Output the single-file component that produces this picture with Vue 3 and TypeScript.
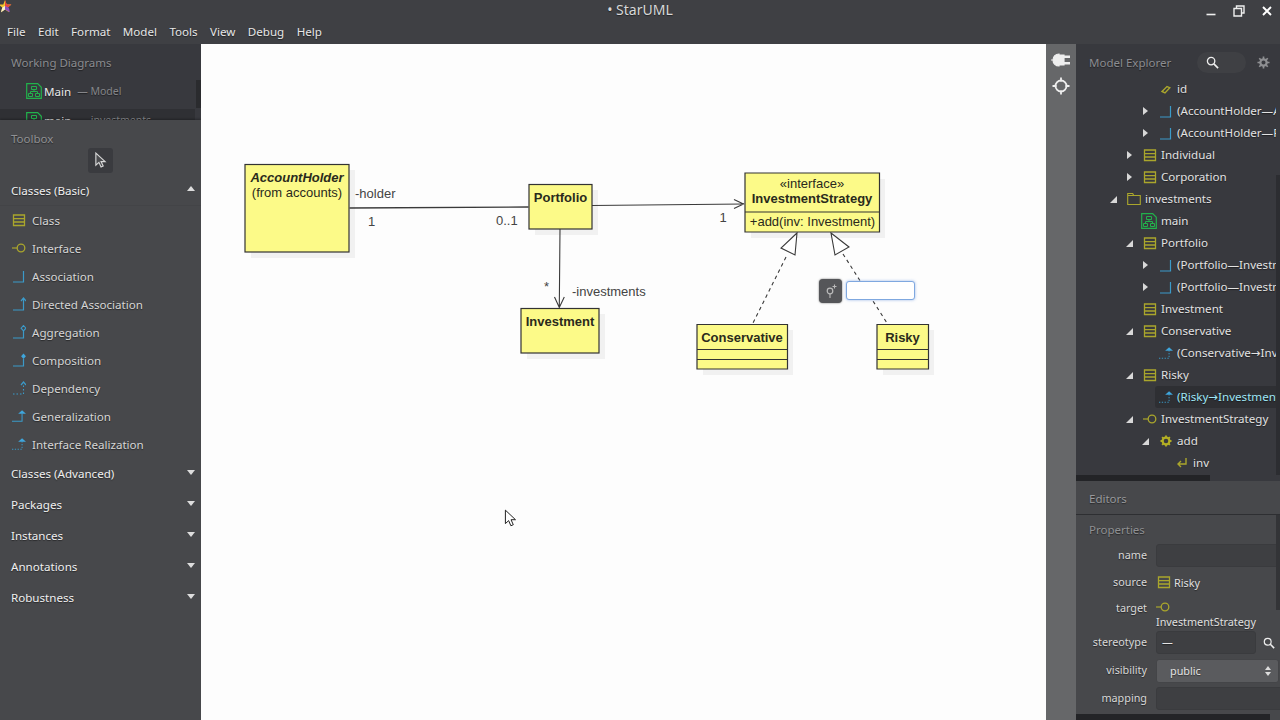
<template>
  <div class="app">
    <svg class="defs" width="0" height="0">
      <defs>
        <symbol id="i-class" viewBox="0 0 14 14">
          <path d="M1.5 2h11v10.5h-11zM1.5 5.6h11M1.5 9h11" fill="none" stroke="#aaa62c" stroke-width="1.3" />
        </symbol>
        <symbol id="i-interface" viewBox="0 0 14 14">
          <path d="M0 7h5" stroke="#aaa62c" stroke-width="1.2" />
          <circle cx="9" cy="7" r="3.8" fill="none" stroke="#aaa62c" stroke-width="1.3" />
        </symbol>
        <symbol id="i-assoc" viewBox="0 0 14 14">
          <path d="M1 13h10.5V2" fill="none" stroke="#3b9ac9" stroke-width="1.2" />
        </symbol>
        <symbol id="i-directed" viewBox="0 0 14 14">
          <path d="M1 13h10.5V2M9 4l2.5-3L14 4" fill="none" stroke="#3b9ac9" stroke-width="1.2" />
        </symbol>
        <symbol id="i-aggregation" viewBox="0 0 14 14">
          <path d="M1 13h10.5V6" fill="none" stroke="#3b9ac9" stroke-width="1.2" />
          <path d="M11.5 0.5l2.4 2.7-2.4 2.7-2.4-2.7z" fill="none" stroke="#3b9ac9" stroke-width="1.1" />
        </symbol>
        <symbol id="i-composition" viewBox="0 0 14 14">
          <path d="M1 13h10.5V6" fill="none" stroke="#3b9ac9" stroke-width="1.2" />
          <path d="M11.5 0.5l2.4 2.7-2.4 2.7-2.4-2.7z" fill="#3fa6dc" />
        </symbol>
        <symbol id="i-dependency" viewBox="0 0 14 14">
          <path d="M1 13h10.5V4" fill="none" stroke="#3b9ac9" stroke-width="1.1" stroke-dasharray="1.5 2" />
          <path d="M9 4l2.5-3L14 4" fill="none" stroke="#3b9ac9" stroke-width="1.2" />
        </symbol>
        <symbol id="i-generalization" viewBox="0 0 16 14">
          <path d="M0 13h11.5V4" fill="none" stroke="#3b9ac9" stroke-width="1.2" />
          <path d="M7 4.5h9L11.5 0.5z" fill="#3fa6dc" />
        </symbol>
        <symbol id="i-realization" viewBox="0 0 16 14">
          <path d="M0 13h11.5V4" fill="none" stroke="#3b9ac9" stroke-width="1.1" stroke-dasharray="1.5 1.7" />
          <path d="M7 4.5h9L11.5 0.5z" fill="#3fa6dc" />
        </symbol>
        <symbol id="i-diagram" viewBox="0 0 16 16">
          <path d="M0.7 0.7h11l3.6 3.6v11h-14.6z" fill="none" stroke="#22b14c" stroke-width="1.2" />
          <path d="M5.5 3.5h5v3h-5zM2.5 10.5h4v3h-4zM9.5 10.5h4v3h-4zM8 6.5v2M4.5 10.5v-2h7v2" fill="none" stroke="#22b14c" stroke-width="1" />
        </symbol>
        <symbol id="i-folder" viewBox="0 0 14 14">
          <path d="M0.7 1.5h5l1 2h6.6v9h-12.6zM0.7 3.5h6" fill="none" stroke="#aaa62c" stroke-width="1.1" />
        </symbol>
        <symbol id="i-attr" viewBox="0 0 14 14">
          <path d="M3 9.5l5-5 2.8 1.2L6 11z" fill="none" stroke="#aaa62c" stroke-width="1.4" />
        </symbol>
        <symbol id="i-op" viewBox="0 0 14 14">
          <circle cx="7" cy="7" r="3.4" fill="none" stroke="#b3af24" stroke-width="2.2" />
          <path d="M7 1.5v2M7 10.5v2M1.5 7h2M10.5 7h2M3.1 3.1l1.4 1.4M9.5 9.5l1.4 1.4M3.1 10.9l1.4-1.4M9.5 4.5l1.4-1.4" stroke="#b3af24" stroke-width="1.8" />
        </symbol>
        <symbol id="i-param" viewBox="0 0 14 14">
          <path d="M11 2v6H3M6 5L3 8l3 3" fill="none" stroke="#aaa62c" stroke-width="1.4" />
        </symbol>
      </defs>
    </svg>

    <header class="titlebar">
      <svg class="logo" viewBox="0 0 16 16" width="16" height="16">
        <path d="M5 0l1.700 4.400 4.700.2-3.700 3 1.300 4.600L5 9.600 1 12.200l1.300-4.600-3.700-3 4.700-.2z" fill="#f4c430" />
        <path d="M5 0l1.700 4.400 4.700.2-3.700 3L5 6z" fill="#e8433f" />
        <path d="M8.700 7.600l1.300 4.600L5 9.600V6z" fill="#8a4fc0" />
        <path d="M5 6v3.600l-4 2.600 1.300-4.600z" fill="#f8efd0" />
      </svg>
      <span class="title">• StarUML</span>
      <div class="winctl">
        <svg viewBox="0 0 12 12" width="12" height="12"><path d="M1.500 9.500h9" stroke="#eee" stroke-width="1.600" /></svg>
        <svg viewBox="0 0 12 12" width="12" height="12"><path d="M1 3.500h7.500V11H1zM3.500 3.500V1H11v7H8.500" fill="none" stroke="#eee" stroke-width="1.400" /></svg>
        <svg viewBox="0 0 12 12" width="12" height="12"><path d="M2 2l8 8M10 2l-8 8" stroke="#fff" stroke-width="1.900" /></svg>
      </div>
    </header>

    <nav class="menubar">
      <span v-for="m in menus" :key="m">{{ m }}</span>
    </nav>

    <div class="body">
      <aside class="left">
        <section class="working">
          <div class="panel-title">Working Diagrams</div>
          <div class="wd-row">
            <svg class="ic16"><use href="#i-diagram" /></svg>
            <span class="wd-name">Main</span><span class="wd-sub">— Model</span>
          </div>
          <div class="wd-row selected">
            <svg class="ic16"><use href="#i-diagram" /></svg>
            <span class="wd-name">main</span><span class="wd-sub">— investments</span>
          </div>
          <div class="wd-scroll"></div>
        </section>

        <section class="toolbox">
          <div class="panel-title tb-title">Toolbox</div>
          <div class="cursor-btn">
            <svg viewBox="0 0 14 18" width="13" height="17">
              <path d="M2 1v13l3.300-3 2.300 5 2.300-1-2.300-4.800H12z" fill="#4a4b4e" stroke="#d8d8d8" stroke-width="1.200" />
            </svg>
          </div>
          <div class="group open">
            <span>Classes (Basic)</span><i class="tri up"></i>
          </div>
          <div v-for="t in tools" :key="t.label" class="tool">
            <svg class="ic14"><use :href="'#i-' + t.icon" /></svg>
            <span>{{ t.label }}</span>
          </div>
          <div v-for="g in groups" :key="g" class="group">
            <span>{{ g }}</span><i class="tri"></i>
          </div>
        </section>
      </aside>

      <main class="canvas">
        <svg class="diagram" viewBox="201 44 845 676" width="845" height="676">
          <g class="shadows" fill="#f1f1f1">
            <rect x="251" y="170" width="104" height="88" />
            <rect x="535" y="190" width="63" height="45" />
            <rect x="527" y="314" width="78" height="45" />
            <rect x="751" y="179" width="134" height="59" />
            <rect x="703" y="330" width="90" height="45" />
            <rect x="883" y="330" width="51" height="45" />
          </g>

          <g class="lines" fill="none" stroke="#3a3a3a" stroke-width="1.100">
            <path d="M349.500 208L528.500 207" stroke-width="1.300" />
            <path d="M592 205.500L744 204M734 199.500l9.500 4.500-9.500 4.500" />
            <path d="M560 229L559.300 307.500M554.500 297l4.800 10.500 5-10.500" />
            <path d="M786 257L753 323M843 254L887 323" stroke-dasharray="3.500 3.500" />
            <path d="M797 233L781 248L795 255Z M831 233L849 247L835 255Z" fill="#fff" />
          </g>

          <g class="boxes" fill="#fcfa88" stroke="#333" stroke-width="1.200">
            <rect x="245" y="164.500" width="104" height="87.500" />
            <rect x="529" y="184.500" width="63" height="44.500" />
            <rect x="521" y="308.500" width="78" height="44.500" />
            <path d="M745 173h134.500v59H745zM745 212h134.500" />
            <path d="M697 324.500h90.500v44.500H697zM697 349.500h90.500M697 359.500h90.500" />
            <path d="M877 324.500h51.500v44.500H877zM877 349.500h51.500M877 359.500h51.500" />
          </g>

          <g class="labels">
            <text x="297" y="181.500" class="c bi">AccountHolder</text>
            <text x="297" y="196.500" class="c">(from accounts)</text>
            <text x="560.500" y="201.500" class="c b">Portfolio</text>
            <text x="560" y="325.500" class="c b">Investment</text>
            <text x="812" y="187.500" class="c">«interface»</text>
            <text x="812" y="202.500" class="c b">InvestmentStrategy</text>
            <text x="812.500" y="225.500" class="c">+add(inv: Investment)</text>
            <text x="742" y="341.500" class="c b">Conservative</text>
            <text x="902.500" y="341.500" class="c b">Risky</text>
            <text x="355" y="197.500" class="note">-holder</text>
            <text x="371.500" y="225.500" class="note c">1</text>
            <text x="496" y="225" class="note">0..1</text>
            <text x="723" y="221.500" class="note c">1</text>
            <text x="546.500" y="291" class="note c">*</text>
            <text x="572" y="295.500" class="note">-investments</text>
          </g>
        </svg>

        <div class="inline-edit">
          <div class="edit-btn">
            <svg viewBox="0 0 16 16" width="16" height="16">
              <circle cx="7" cy="8" r="2.800" fill="none" stroke="#bbb" stroke-width="1.200" />
              <path d="M7 11v4M11.500 1.500v4M9.500 3.500h4" stroke="#bbb" stroke-width="1.100" />
            </svg>
          </div>
          <input class="edit-input" type="text" />
        </div>

        <svg class="pointer" viewBox="0 0 14 20" width="13" height="19">
          <path d="M1.500 1v14.500l3.500-3.200 2.400 5.500 2.600-1.100-2.400-5.400h4.800z" fill="#fff" stroke="#111" stroke-width="1" />
        </svg>
      </main>

      <div class="strip">
        <svg viewBox="0 0 20 16" width="20" height="16">
          <path d="M0 8h6M8 2v12a6 6 0 0 1 0-12zM8 3h5v10H8z" fill="#eee" stroke="#eee" stroke-width="1.200" />
          <path d="M13 4.800h6M13 11.200h6" stroke="#eee" stroke-width="2.400" />
        </svg>
        <svg viewBox="0 0 18 18" width="18" height="18">
          <circle cx="9" cy="9" r="5.500" fill="none" stroke="#eee" stroke-width="1.800" />
          <path d="M9 0.500v4M9 13.500v4M0.500 9h4M13.500 9h4" stroke="#eee" stroke-width="1.800" />
        </svg>
      </div>

      <aside class="right">
        <section class="explorer">
          <div class="exp-head">
            <span class="panel-title-inline">Model Explorer</span>
            <div class="search">
              <svg viewBox="0 0 14 14" width="13" height="13">
                <circle cx="5.500" cy="5.500" r="4" fill="none" stroke="#eee" stroke-width="1.400" />
                <path d="M8.500 8.500l4.500 4.500" stroke="#eee" stroke-width="1.800" />
              </svg>
            </div>
            <svg class="gear" viewBox="0 0 14 14" width="13" height="13">
              <circle cx="7" cy="7" r="3.400" fill="none" stroke="#8e8f92" stroke-width="2.400" />
              <path d="M7 0.500v3M7 10.500v3M0.500 7h3M10.500 7h3M2.400 2.400l2.100 2.100M9.500 9.500l2.100 2.100M2.400 11.600l2.100-2.100M9.500 4.500l2.100-2.100" stroke="#8e8f92" stroke-width="1.800" />
            </svg>
          </div>
          <div class="tree">
            <div
              v-for="(n, i) in nodes"
              :key="i"
              class="node"
              :class="{ sel: n.sel }"
              :style="{ paddingLeft: n.level * 16 + 'px' }"
            >
              <span class="twisty">
                <i v-if="n.tw === 'r'" class="tw-right"></i>
                <i v-if="n.tw === 'd'" class="tw-down"></i>
              </span>
              <span class="node-icon"><svg :class="n.icon === 'diagram' ? 'ic16' : 'ic13'"><use :href="'#i-' + n.icon" /></svg></span>
              <span class="node-label">{{ n.label }}</span>
            </div>
          </div>
          <div class="tree-vscroll"></div>
          <div class="tree-hscroll"></div>
        </section>

        <section class="editors">
          <div class="editors-title">Editors</div>
          <div class="props">
            <div class="props-title">Properties</div>
            <div class="prop-grid">
              <label>name</label>
              <div class="field"></div>
              <label>source</label>
              <div class="ref"><svg class="ic14"><use href="#i-class" /></svg>Risky</div>
              <label class="target-label">target</label>
              <div class="ref stacked">
                <svg class="ic14"><use href="#i-interface" /></svg>
                <span>InvestmentStrategy</span>
              </div>
              <label>stereotype</label>
              <div class="with-search">
                <div class="field short">—</div>
                <svg viewBox="0 0 14 14" width="12" height="12">
                  <circle cx="5.500" cy="5.500" r="4" fill="none" stroke="#eee" stroke-width="1.400" />
                  <path d="M8.500 8.500l4.500 4.500" stroke="#eee" stroke-width="1.800" />
                </svg>
              </div>
              <label>visibility</label>
              <div class="select">public<span class="updown"></span></div>
              <label>mapping</label>
              <div class="field"></div>
            </div>
            <div class="props-vscroll"></div>
            <div class="props-hscroll"></div>
          </div>
        </section>
      </aside>
    </div>
  </div>
</template>

<script setup lang="ts">
interface TreeNode {
  level: number
  tw?: 'r' | 'd'
  icon: string
  label: string
  sel?: boolean
}

const menus = ['File', 'Edit', 'Format', 'Model', 'Tools', 'View', 'Debug', 'Help']

const tools = [
  { icon: 'class', label: 'Class' },
  { icon: 'interface', label: 'Interface' },
  { icon: 'assoc', label: 'Association' },
  { icon: 'directed', label: 'Directed Association' },
  { icon: 'aggregation', label: 'Aggregation' },
  { icon: 'composition', label: 'Composition' },
  { icon: 'dependency', label: 'Dependency' },
  { icon: 'generalization', label: 'Generalization' },
  { icon: 'realization', label: 'Interface Realization' },
]

const groups = ['Classes (Advanced)', 'Packages', 'Instances', 'Annotations', 'Robustness']

const nodes: TreeNode[] = [
  { level: 2, icon: 'attr', label: 'id' },
  { level: 2, tw: 'r', icon: 'assoc', label: '(AccountHolder—Account)' },
  { level: 2, tw: 'r', icon: 'assoc', label: '(AccountHolder—Portfolio)' },
  { level: 1, tw: 'r', icon: 'class', label: 'Individual' },
  { level: 1, tw: 'r', icon: 'class', label: 'Corporation' },
  { level: 0, tw: 'd', icon: 'folder', label: 'investments' },
  { level: 1, icon: 'diagram', label: 'main' },
  { level: 1, tw: 'd', icon: 'class', label: 'Portfolio' },
  { level: 2, tw: 'r', icon: 'assoc', label: '(Portfolio—Investment)' },
  { level: 2, tw: 'r', icon: 'assoc', label: '(Portfolio—InvestmentStrategy)' },
  { level: 1, icon: 'class', label: 'Investment' },
  { level: 1, tw: 'd', icon: 'class', label: 'Conservative' },
  { level: 2, icon: 'realization', label: '(Conservative→InvestmentStrategy)' },
  { level: 1, tw: 'd', icon: 'class', label: 'Risky' },
  { level: 2, icon: 'realization', label: '(Risky→InvestmentStrategy)', sel: true },
  { level: 1, tw: 'd', icon: 'interface', label: 'InvestmentStrategy' },
  { level: 2, tw: 'd', icon: 'op', label: 'add' },
  { level: 3, icon: 'param', label: 'inv' },
]
</script>

<style scoped>
.app {
  width: 1280px;
  height: 720px;
  display: flex;
  flex-direction: column;
  overflow: hidden;
  background: #3f4044;
  color: #e4e4e4;
  font-family: "Noto Sans", "DejaVu Sans", sans-serif;
  font-size: 11.6px;
  text-shadow: 0 1px 1px rgba(0, 0, 0, 0.45);
}

.defs {
  position: absolute;
}

.titlebar {
  height: 20px;
  position: relative;
  flex: none;
}

.logo {
  position: absolute;
  left: 0;
  top: 0;
}

.title {
  display: block;
  text-align: center;
  font-size: 14px;
  line-height: 20px;
  color: #d8d8d8;
}

.winctl {
  position: absolute;
  right: 7px;
  top: 5px;
  display: flex;
  gap: 16px;
}

.menubar {
  height: 24px;
  flex: none;
  display: flex;
  align-items: center;
  gap: 12.4px;
  padding: 0 0 2px 7px;
  box-sizing: border-box;
  color: #e6e6e6;
}

.body {
  flex: 1;
  display: flex;
  min-height: 0;
}

.left {
  width: 201px;
  flex: none;
  display: flex;
  flex-direction: column;
}

.working {
  height: 76px;
  flex: none;
  background: #38393e;
  position: relative;
  overflow: hidden;
  padding-top: 9px;
  box-sizing: border-box;
}

.panel-title {
  padding-left: 11px;
  color: #8b8c90;
  font-size: 11.5px;
  line-height: 20px;
}

.wd-row {
  height: 22px;
  margin-top: 7px;
  padding-left: 26px;
  display: flex;
  align-items: center;
  gap: 2px;
}

.wd-row + .wd-row {
  margin-top: 7px;
}

.wd-name {
  color: #e8e8e8;
  margin-right: 4px;
}

.wd-sub {
  color: #85868a;
  font-size: 10.5px;
}

.wd-row.selected {
  background: #2f3034;
  margin-right: 6px;
}

.wd-scroll {
  position: absolute;
  right: 0;
  top: 36px;
  width: 5px;
  height: 28px;
  background: #2a2b2e;
}

.toolbox {
  flex: 1;
  background: #47484b;
  padding-top: 9px;
  box-shadow: 0 -1px 2px rgba(0, 0, 0, 0.3);
  position: relative;
}

.tb-title {
  color: #909194;
}

.cursor-btn {
  width: 25px;
  height: 25px;
  margin: -1px 0 0 88px;
  background: #3a3b3f;
  border-radius: 3px;
  display: flex;
  align-items: center;
  justify-content: center;
}

.group {
  height: 31px;
  padding: 0 6px 0 11px;
  display: flex;
  align-items: center;
  justify-content: space-between;
  color: #f0f0f0;
}

.group.open {
  margin-top: 2px;
  border-bottom: 1px solid #434447;
  box-sizing: border-box;
}

.tri {
  width: 0;
  height: 0;
  border-left: 4px solid transparent;
  border-right: 4px solid transparent;
  border-top: 5px solid #ddd;
  margin-bottom: 3px;
}

.tri.up {
  border-top: 0;
  border-bottom: 5px solid #ddd;
}

.tool {
  height: 28px;
  padding-left: 12px;
  display: flex;
  align-items: center;
  gap: 6px;
  color: #d6d6d6;
}

.ic14 {
  width: 14px;
  height: 14px;
  flex: none;
}

.ic13 {
  width: 14px;
  height: 14px;
}

.ic16 {
  width: 16px;
  height: 16px;
  flex: none;
}

.canvas {
  width: 845px;
  flex: none;
  background: #fdfdfd;
  position: relative;
  overflow: hidden;
}

.diagram {
  display: block;
  font-family: "Liberation Sans", Arial, sans-serif;
  font-size: 13px;
  text-shadow: none;
}

.diagram text {
  fill: #2a2a1c;
}

.diagram .c {
  text-anchor: middle;
}

.diagram .b {
  font-weight: 700;
}

.diagram .bi {
  font-weight: 700;
  font-style: italic;
}

.diagram .note {
  fill: #444;
}

.inline-edit {
  position: absolute;
  left: 618px;
  top: 235px;
  display: flex;
  align-items: center;
  gap: 4px;
}

.edit-btn {
  width: 23px;
  height: 24px;
  background: #555659;
  border-radius: 4px;
  box-shadow: 0 0 2px rgba(0, 0, 0, 0.6);
  display: flex;
  align-items: center;
  justify-content: center;
}

.edit-input {
  width: 69px;
  height: 19px;
  box-sizing: border-box;
  border: 1px solid #7fa8e0;
  border-radius: 3px;
  background: #fff;
  outline: 0;
  padding: 0;
  margin-top: -2px;
  box-shadow: 0 0 3px rgba(90, 140, 220, 0.6);
}

.pointer {
  position: absolute;
  left: 303px;
  top: 465px;
}

.strip {
  width: 30px;
  flex: none;
  background: #666769;
  display: flex;
  flex-direction: column;
  align-items: center;
  gap: 9px;
  padding-top: 8px;
  box-sizing: border-box;
}

.right {
  flex: 1;
  min-width: 0;
  display: flex;
  flex-direction: column;
}

.explorer {
  height: 437px;
  flex: none;
  background: #38393e;
  position: relative;
  overflow: hidden;
}

.exp-head {
  height: 34px;
  display: flex;
  align-items: center;
  padding: 2px 0 0 13px;
  box-sizing: border-box;
}

.panel-title-inline {
  color: #8b8c90;
  font-size: 11.5px;
  width: 108px;
  flex: none;
}

.search {
  width: 49px;
  height: 21px;
  border-radius: 11px;
  background: #3f4044;
  display: flex;
  align-items: center;
  padding-left: 9px;
  box-sizing: border-box;
  flex: none;
}

.gear {
  margin-left: 11px;
}

.tree {
  width: 200px;
  overflow: hidden;
}

.node {
  height: 22px;
  display: flex;
  align-items: center;
  white-space: nowrap;
  margin-left: 30px;
}

.twisty {
  width: 14px;
  flex: none;
  display: flex;
  justify-content: center;
}

.tw-right {
  width: 0;
  height: 0;
  border-top: 4px solid transparent;
  border-bottom: 4px solid transparent;
  border-left: 5px solid #d8d8d8;
}

.tw-down {
  width: 0;
  height: 0;
  border-left: 7px solid transparent;
  border-bottom: 7px solid #d8d8d8;
}

.node-icon {
  width: 21px;
  margin-right: 4px;
  flex: none;
  display: flex;
  justify-content: flex-end;
}

.node-label {
  color: #e2e2e2;
  margin-top: -1px;
}

.node.sel .node-label {
  color: #9fe6f5;
}

.node.sel {
  position: relative;
}

.node.sel::before {
  content: "";
  position: absolute;
  left: 49px;
  right: 0;
  top: 0;
  bottom: 0;
  background: #2e2f33;
  border-radius: 3px 0 0 3px;
}

.node.sel > * {
  position: relative;
}

.tree-vscroll {
  position: absolute;
  right: 0;
  top: 131px;
  width: 4px;
  height: 300px;
  background: #2c2d31;
}

.tree-hscroll {
  position: absolute;
  left: 0;
  bottom: 0;
  width: 134px;
  height: 6px;
  background: #232427;
}

.editors {
  flex: 1;
  background: #47484b;
  min-height: 0;
}

.editors-title {
  height: 34px;
  line-height: 36px;
  padding-left: 13px;
  color: #98999c;
  font-size: 11.5px;
  border-bottom: 1px solid #2e2f32;
  box-sizing: border-box;
}

.props {
  position: relative;
  height: 205px;
  overflow: hidden;
}

.props-title {
  height: 29px;
  line-height: 29px;
  padding-left: 13px;
  color: #8f9093;
  font-size: 11.5px;
}

.prop-grid {
  display: grid;
  grid-template-columns: 71px 1fr;
  column-gap: 9px;
  row-gap: 4px;
  align-items: center;
  width: 240px;
  font-size: 10.8px;
}

.prop-grid label {
  text-align: right;
  color: #d8d8d8;
  margin-top: -2px;
}

.prop-grid .target-label {
  align-self: start;
  margin-top: 3px;
}

.field {
  height: 23px;
  box-sizing: border-box;
  background: #3e3f42;
  border: 1px solid #3a3b3e;
  border-radius: 3px;
}

.field.short {
  width: 100px;
  padding-left: 5px;
  line-height: 20px;
  flex: none;
}

.with-search {
  display: flex;
  align-items: center;
  gap: 7px;
}

.ref {
  display: flex;
  align-items: center;
  gap: 3px;
  height: 22px;
  padding-left: 1px;
  color: #e0e0e0;
}

.ref.stacked {
  height: 30px;
  display: block;
  padding: 3px 0 0;
  box-sizing: border-box;
  line-height: 14px;
  white-space: nowrap;
}

.ref.stacked svg {
  display: block;
  margin-bottom: 1px;
}

.select {
  height: 24px;
  margin-top: 1px;
  box-sizing: border-box;
  background: #5a5b5e;
  border: 1px solid #444548;
  border-radius: 3px;
  padding-left: 13px;
  line-height: 22px;
  position: relative;
  width: 123px;
}

.updown {
  position: absolute;
  left: 108px;
  top: 6px;
  width: 0;
  height: 0;
  border-left: 3px solid transparent;
  border-right: 3px solid transparent;
  border-bottom: 4px solid #ddd;
}

.updown::after {
  content: "";
  position: absolute;
  left: -3px;
  top: 6px;
  border-left: 3px solid transparent;
  border-right: 3px solid transparent;
  border-top: 4px solid #ddd;
}

.props-vscroll {
  position: absolute;
  right: 0;
  top: 0;
  width: 4px;
  height: 95px;
  background: #333437;
}

.props-hscroll {
  position: absolute;
  left: 0;
  bottom: 0;
  width: 194px;
  height: 6px;
  background: #232427;
}
</style>

<style>
html,
body {
  margin: 0;
  background: #3f4044;
  overflow: hidden;
}
</style>
